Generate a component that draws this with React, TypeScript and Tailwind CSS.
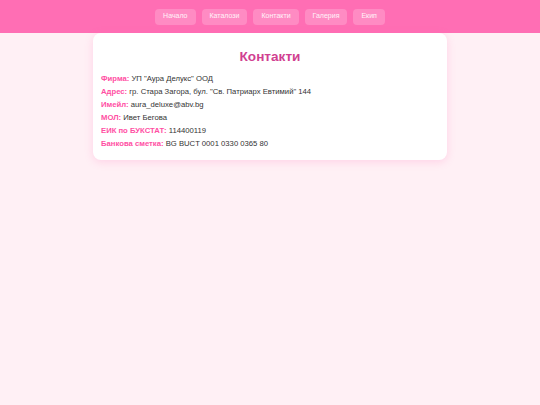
export default function App() {
  const links = ['Начало', 'Каталози', 'Контакти', 'Галерия', 'Екип'];
  const rows: [string, string][] = [
    ['Фирма:', 'УП "Аура Делукс" ООД'],
    ['Адрес:', 'гр. Стара Загора, бул. "Св. Патриарх Евтимий" 144'],
    ['Имейл:', 'aura_deluxe@abv.bg'],
    ['МОЛ:', 'Ивет Бегова'],
    ['ЕИК по БУКСТАТ:', '114400119'],
    ['Банкова сметка:', 'BG BUCT 0001 0330 0365 80'],
  ];

  return (
    <div className="min-h-[405px] bg-[#fff0f5]" style={{ fontFamily: '"Liberation Sans", Arial, sans-serif' }}>
      {/* Header nav */}
      <header className="h-[33px] bg-[#ff6eb4] flex items-center justify-center gap-[6px]">
        {links.map((l) => (
          <a
            key={l}
            className="h-[16px] px-[8px] flex items-center rounded-[4px] bg-white/20 text-white/90 text-[7px]"
          >
            {l}
          </a>
        ))}
      </header>

      {/* Contacts card */}
      <div className="w-[354px] mx-auto bg-white rounded-[8px] shadow-[0_2px_8px_rgba(255,105,180,0.22)] px-[8px] pt-[15px] pb-[10px]">
        <h1 className="text-center text-[13.6px] font-bold text-[#d13f91] leading-[18px] mb-[6px]">Контакти</h1>
        <div className="flex flex-col">
          {rows.map(([k, v]) => (
            <p key={k} className="text-[7.7px] leading-[13px] text-[#333]">
              <span className="font-bold text-[#ff4fa3]">{k}</span> {v}
            </p>
          ))}
        </div>
      </div>
    </div>
  );
}
